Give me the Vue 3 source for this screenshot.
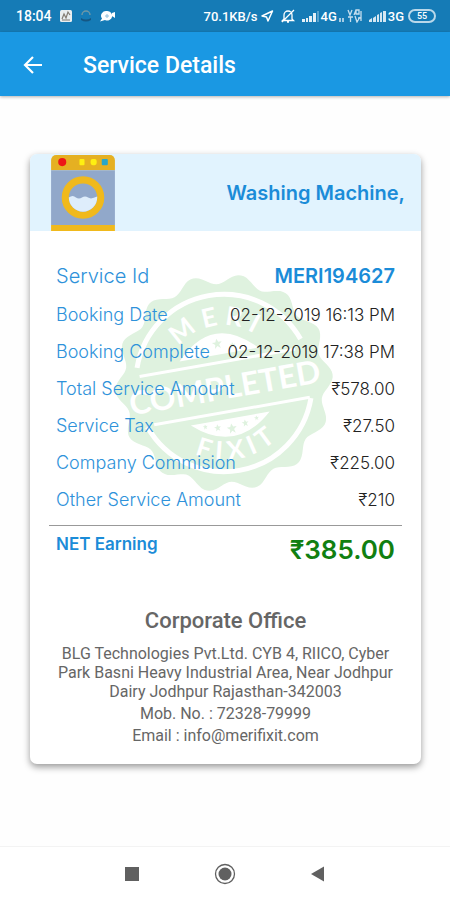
<template>
  <div class="screen">
    <!-- status bar -->
    <div class="status-bar">
      <div class="status-group">
        <span class="clock">18:04</span>
        <svg width="12" height="14" viewBox="0 0 12 14" aria-hidden="true">
          <rect y="1" width="12" height="12" rx="1.5" fill="#e9eef0" />
          <path d="M2 10l2-5 2 4 2-6 2 3M2 11h8" fill="none" stroke="#827b72" stroke-width="1.2" />
        </svg>
        <svg width="12" height="14" viewBox="0 0 12 14" aria-hidden="true">
          <path d="M2 6a4 4 0 0 1 8 0" fill="none" stroke="#6f98a6" stroke-width="1.4" />
          <path d="M1 9q5 3 10 0v2q-5 3-10 0z" fill="#155783" />
        </svg>
        <svg width="15" height="14" viewBox="0 0 15 14" aria-hidden="true">
          <path d="M7 2a5 4.8 0 1 1-2 9.100L0 12.500l2-3A5 4.800 0 0 1 7 2zM12 4l3-1v6l-3-2z" fill="#fff" />
          <path d="M5 7h4M7 5v4" stroke="#91bfdc" />
        </svg>
      </div>
      <div class="status-group tight">
        <span>70.1KB/s</span>
        <svg width="14" height="14" viewBox="0 0 14 14" aria-hidden="true">
          <path d="M12.500 2L8 12 6.500 8 2 7z" fill="none" stroke="#fff" stroke-width="1.500" stroke-linejoin="round" />
        </svg>
        <svg class="bell" width="16" height="16" viewBox="0 0 16 16" aria-hidden="true">
          <path d="M4 11V7a4 4 0 0 1 8 0v4l1.500 1.500h-11zM7 14h2M2 14L14 2" fill="none" stroke="#fff" stroke-width="1.300" />
        </svg>
        <svg width="17" height="14" viewBox="0 0 17 14" aria-hidden="true">
          <path d="M0 10h3v3H0zM4 9h2v4H4zM7 7h3v6H7zM11 4h3v9h-3z" fill="#e4f0f7" />
          <path d="M15 2h2v11h-2z" fill="#5ba2cc" />
        </svg>
        <span>4G</span>
        <svg width="6" height="14" viewBox="0 0 6 14" aria-hidden="true">
          <path d="M0 9h2v4H0zM3 9h2v4H3z" fill="#a5cce4" />
        </svg>
        <svg class="volte" width="15" height="14" viewBox="0 0 15 14" aria-hidden="true">
          <path d="M1 1l2 5 2-5M9 1L7 6M9 1h3v4H9zM1 8h5M3.500 8v5M8 7l2 6 3-5M11 9h3M14 2v10" fill="none" stroke="#c7dfee" stroke-width="1.300" />
        </svg>
        <svg width="17" height="14" viewBox="0 0 17 14" aria-hidden="true">
          <path d="M0 11l3-2v4H0zM4 9l3-2v6H4zM8 6l2-1v8H8zM11 4l2-1v10h-2zM14 2h3v11h-3z" fill="#d5e7f2" />
        </svg>
        <span>3G</span>
        <span class="battery">55</span>
      </div>
    </div>

    <!-- app bar -->
    <header class="app-bar">
      <button class="back" type="button" aria-label="Back">
        <svg width="20" height="20" viewBox="0 0 20 20" aria-hidden="true">
          <path d="M19 10H2M10 2l-8 8 8 8" fill="none" stroke="#fff" stroke-width="2.200" />
        </svg>
      </button>
      <h1>Service Details</h1>
    </header>

    <main>
      <article class="card">
        <div class="card-head">
          <svg class="washer" viewBox="0 0 63 76" aria-hidden="true">
            <path d="M0 16V6a5 5 0 0 1 5-5h53a5 5 0 0 1 5 5v10z" fill="#e5b022" />
            <path d="M0 16h63v54H0z" fill="#91a8ca" />
            <path d="M0 70h63v6H0z" fill="#f0b91c" />
            <circle cx="11" cy="8" r="4" fill="#ed1717" />
            <rect x="28" y="5" width="5" height="6" rx="1" fill="#fff011" />
            <rect x="39" y="5" width="6" height="6" rx="2" fill="#fff011" />
            <rect x="50" y="5" width="6" height="6" rx="1" fill="#28a6c9" />
            <circle cx="31.500" cy="43" r="17.500" fill="#91a8ca" stroke="#f0b91c" stroke-width="7" />
            <path d="M17.500 43q4-3 7 0 3 2 6 0t6 0 9-1v1a14 14 0 0 1-28 0z" fill="#deedfb" />
          </svg>
          <h2>Washing Machine,</h2>
        </div>

        <div class="details">
          <svg class="stamp" viewBox="-110 -110 220 220" aria-hidden="true">
            <path :d="sealPath" fill="#dff2df" />
            <g transform="rotate(-10)">
              <path d="M-83-30A88 88 0 0 1 83-30M-83 30A88 88 0 0 0 83 30" fill="none" stroke="#fff" stroke-width="5" />
              <path d="M-82-21H76M-76 29H82" stroke="#fff" stroke-width="3" />
              <path d="M-40-29Q0-71 40-29zM-40 36Q0 72 40 36z" fill="#fff" />
              <g fill="#dff2df">
                <path v-for="s in stars" :key="s.id" :d="starPath" :transform="`translate(${s.x} ${s.y}) scale(${s.size})`" />
              </g>
              <path id="arc-top" d="M-58 0A58 58 0 0 1 58 0" fill="none" />
              <path id="arc-bottom" d="M-77 0A77 77 0 0 0 77 0" fill="none" />
              <text class="stamp-small"><textPath href="#arc-top" startOffset="50%">M E R I</textPath></text>
              <text class="stamp-small"><textPath href="#arc-bottom" startOffset="50%">F I X I T</textPath></text>
              <text class="stamp-main" y="16">COMPLETED</text>
            </g>
          </svg>

          <dl class="rows">
            <div class="row row-id">
              <dt>Service Id</dt>
              <dd>MERI194627</dd>
            </div>
            <div v-for="row in rows" :key="row.label" class="row">
              <dt>{{ row.label }}</dt>
              <dd>{{ row.value }}</dd>
            </div>
            <div class="row row-net">
              <dt>NET Earning</dt>
              <dd>₹385.00</dd>
            </div>
          </dl>
        </div>

        <footer class="office">
          <h3>Corporate Office</h3>
          <address>
            <p>BLG Technologies Pvt.Ltd. CYB 4, RIICO, Cyber Park Basni Heavy Industrial Area, Near Jodhpur Dairy Jodhpur Rajasthan-342003</p>
            <p>Mob. No. : 72328-79999</p>
            <p>Email : info@merifixit.com</p>
          </address>
        </footer>
      </article>
    </main>

    <!-- system navigation -->
    <nav class="nav-bar">
      <button type="button" aria-label="Recent apps">
        <svg width="22" height="22" viewBox="0 0 22 22"><path d="M4 4h14v14H4z" fill="#606060" /></svg>
      </button>
      <button type="button" aria-label="Home">
        <svg width="22" height="22" viewBox="0 0 22 22">
          <circle cx="11" cy="11" r="9.500" fill="none" stroke="#606060" stroke-width="1.300" />
          <circle cx="11" cy="11" r="6.500" fill="#606060" />
        </svg>
      </button>
      <button type="button" aria-label="Back">
        <svg width="22" height="22" viewBox="0 0 22 22"><path d="M17 3.500v15L4 11z" fill="#606060" /></svg>
      </button>
    </nav>
  </div>
</template>

<script setup>
const rows = [
  { label: 'Booking Date', value: '02-12-2019 16:13 PM' },
  { label: 'Booking Complete', value: '02-12-2019 17:38 PM' },
  { label: 'Total Service Amount', value: '₹578.00' },
  { label: 'Service Tax', value: '₹27.50' },
  { label: 'Company Commision', value: '₹225.00' },
  { label: 'Other Service Amount', value: '₹210' },
]

// wavy outline of the seal
const sealPath = 'M' + Array.from({ length: 240 }, (_, i) => {
  const a = (i / 240) * Math.PI * 2
  const r = 104 + 5 * Math.cos(a * 14 + 1)
  return `${(r * Math.cos(a)).toFixed(1)} ${(r * Math.sin(a)).toFixed(1)}`
}).join('L') + 'Z'

const starPath = 'M0-5L1.500-1.500 5-1.500 2 1 3 5 0 2.500-3 5-2 1-5-1.500-1.500-1.500Z'
const stars = [
  { id: 1, x: 0, y: -40, size: 1 },
  { id: 2, x: -15, y: -36, size: 0.6 },
  { id: 3, x: 15, y: -36, size: 0.6 },
  { id: 4, x: 0, y: 46, size: 1 },
  { id: 5, x: -14, y: 43, size: 0.7 },
  { id: 6, x: 14, y: 43, size: 0.7 },
  { id: 7, x: -26, y: 40, size: 0.5 },
  { id: 8, x: 26, y: 40, size: 0.5 },
]
</script>

<style>
body { margin: 0; background: #fefefe; }
</style>

<style scoped>
.screen {
  min-height: 100vh;
  display: flex;
  flex-direction: column;
  font-family: Roboto, "Liberation Sans", sans-serif;
}
h1, h2, h3, p, dl, dd { margin: 0; }
button {
  display: flex;
  padding: 0;
  border: 0;
  background: none;
}

.status-bar {
  height: 32px;
  padding: 0 14px 0 16px;
  display: flex;
  align-items: center;
  justify-content: space-between;
  background: #157bb6;
  color: #fff;
  font-size: 13px;
  font-weight: 500;
}
.status-group { display: flex; align-items: center; gap: 8px; }
.status-group.tight { gap: 2px; }
.clock { font-size: 14px; }
.bell { margin: 0 4px; }
.volte { margin-right: 5px; }
.battery {
  box-sizing: border-box;
  width: 28px;
  height: 14px;
  margin-left: 2px;
  border: 2px solid #b9d8ea;
  border-radius: 7px;
  font-size: 9px;
  line-height: 10px;
  text-align: center;
}

.app-bar {
  box-sizing: border-box;
  height: 64px;
  padding: 2px 23px 0;
  display: flex;
  align-items: center;
  gap: 40px;
  background: #1a98e3;
  color: #fff;
  box-shadow: 0 1px 3px rgba(0, 0, 0, .3);
}
.app-bar h1 { font-size: 23px; font-weight: 500; }

main { flex: 1; padding: 58px 29px 40px 30px; }
.card {
  border-radius: 7px;
  background: #fff;
  box-shadow: 0 3px 7px rgba(0, 0, 0, .4);
}
.card-head {
  height: 77px;
  padding: 0 16px 0 21px;
  display: flex;
  align-items: center;
  justify-content: space-between;
  border-radius: 7px 7px 0 0;
  background: #e1f3fe;
  color: #1b8cd8;
  font-family: Inter, Roboto, sans-serif;
}
.washer { width: 64px; height: 77px; }
.card-head h2 { font-size: 20px; font-weight: 600; }

.details {
  position: relative;
  padding: 24px 19px 0;
  font-family: Inter, Roboto, sans-serif;
}
/* seal lies under the rows */
.stamp {
  position: absolute;
  top: 42px;
  left: calc(50% - 112px);
  width: 220px;
  height: 220px;
}
.stamp-small, .stamp-main {
  fill: #fff;
  text-anchor: middle;
  font-family: Lato, sans-serif;
  font-weight: 700;
}
.stamp-small { font-size: 26px; }
.stamp-main { font-size: 32px; }

.rows { position: relative; }
.row {
  height: 37px;
  padding: 0 7px;
  display: flex;
  align-items: center;
  justify-content: space-between;
  font-size: 17px;
  white-space: nowrap;
}
.row dt { color: #2e92da; font-size: 18px; font-weight: 300; }
.row dd { color: #222; font-weight: 300; }
.row-id { height: 41px; }
.row-id dt { font-size: 20px; }
.row-id dd { color: #1b8cd8; font-size: 20px; font-weight: 600; }
.row-net {
  height: 46px;
  margin-top: 7px;
  border-top: 1px solid #999;
}
.row-net dt {
  align-self: flex-start;
  padding-top: 8px;
  color: #1b8cd8;
  font-size: 17px;
  font-weight: 600;
}
.row-net dd { color: #118011; font-size: 26px; font-weight: 600; }

.office {
  padding: 35px 24px 19px;
  color: #666;
  text-align: center;
}
.office h3 { font-size: 22px; line-height: 28px; font-weight: 500; }
.office address { padding-top: 9px; font-size: 16px; line-height: 19px; font-style: normal; }
.office p + p { margin-top: 3px; }

.nav-bar {
  height: 53px;
  display: flex;
  align-items: center;
  justify-content: center;
  gap: 71px;
  border-top: 1px solid #f3f3f3;
  background: #fff;
}
</style>
